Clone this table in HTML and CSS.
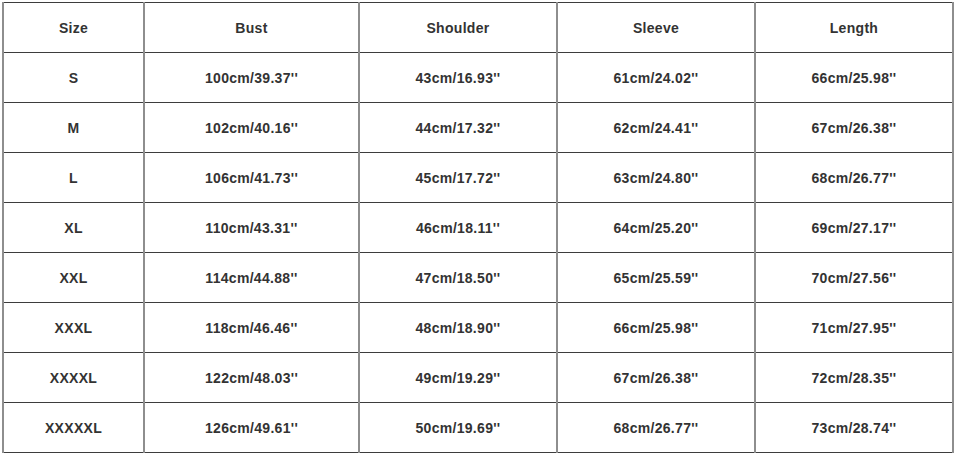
FILE: index.html
```html
<!DOCTYPE html>
<html>
<head>
<meta charset="utf-8">
<link rel="stylesheet" href="styles.css">
</head>
<body>
<table class="size-table">
  <colgroup>
    <col class="c-size"><col class="c-bust"><col class="c-mid"><col class="c-mid"><col class="c-last">
  </colgroup>
  <thead>
    <tr><th>Size</th><th>Bust</th><th>Shoulder</th><th>Sleeve</th><th>Length</th></tr>
  </thead>
  <tbody>
    <tr><td>S</td><td>100cm/39.37''</td><td>43cm/16.93''</td><td>61cm/24.02''</td><td>66cm/25.98''</td></tr>
    <tr><td>M</td><td>102cm/40.16''</td><td>44cm/17.32''</td><td>62cm/24.41''</td><td>67cm/26.38''</td></tr>
    <tr><td>L</td><td>106cm/41.73''</td><td>45cm/17.72''</td><td>63cm/24.80''</td><td>68cm/26.77''</td></tr>
    <tr><td>XL</td><td>110cm/43.31''</td><td>46cm/18.11''</td><td>64cm/25.20''</td><td>69cm/27.17''</td></tr>
    <tr><td>XXL</td><td>114cm/44.88''</td><td>47cm/18.50''</td><td>65cm/25.59''</td><td>70cm/27.56''</td></tr>
    <tr><td>XXXL</td><td>118cm/46.46''</td><td>48cm/18.90''</td><td>66cm/25.98''</td><td>71cm/27.95''</td></tr>
    <tr><td>XXXXL</td><td>122cm/48.03''</td><td>49cm/19.29''</td><td>67cm/26.38''</td><td>72cm/28.35''</td></tr>
    <tr><td>XXXXXL</td><td>126cm/49.61''</td><td>50cm/19.69''</td><td>68cm/26.77''</td><td>73cm/28.74''</td></tr>
  </tbody>
</table>
</body>
</html>
```
FILE: styles.css
```css
html, body {
  margin: 0;
  padding: 0;
  background: #ffffff;
}
body {
  padding: 2px 0 0 2px;
  font-family: "Liberation Sans", Arial, sans-serif;
}
.size-table {
  border-collapse: collapse;
  table-layout: fixed;
  width: 950px;
}
.c-size { width: 141px; }
.c-bust { width: 215px; }
.c-mid { width: 198px; }
.c-last { width: 198px; }
.size-table th,
.size-table td {
  height: 49px;
  padding: 0;
  text-align: center;
  vertical-align: middle;
  font-size: 14px;
  font-weight: bold;
  letter-spacing: 0.3px;
  color: #333333;
  border-top: 1px solid #3d3d3d;
  border-bottom: 1px solid #3d3d3d;
  border-left: 2px solid #8e8e8e;
  border-right: 2px solid #8e8e8e;
}
```
